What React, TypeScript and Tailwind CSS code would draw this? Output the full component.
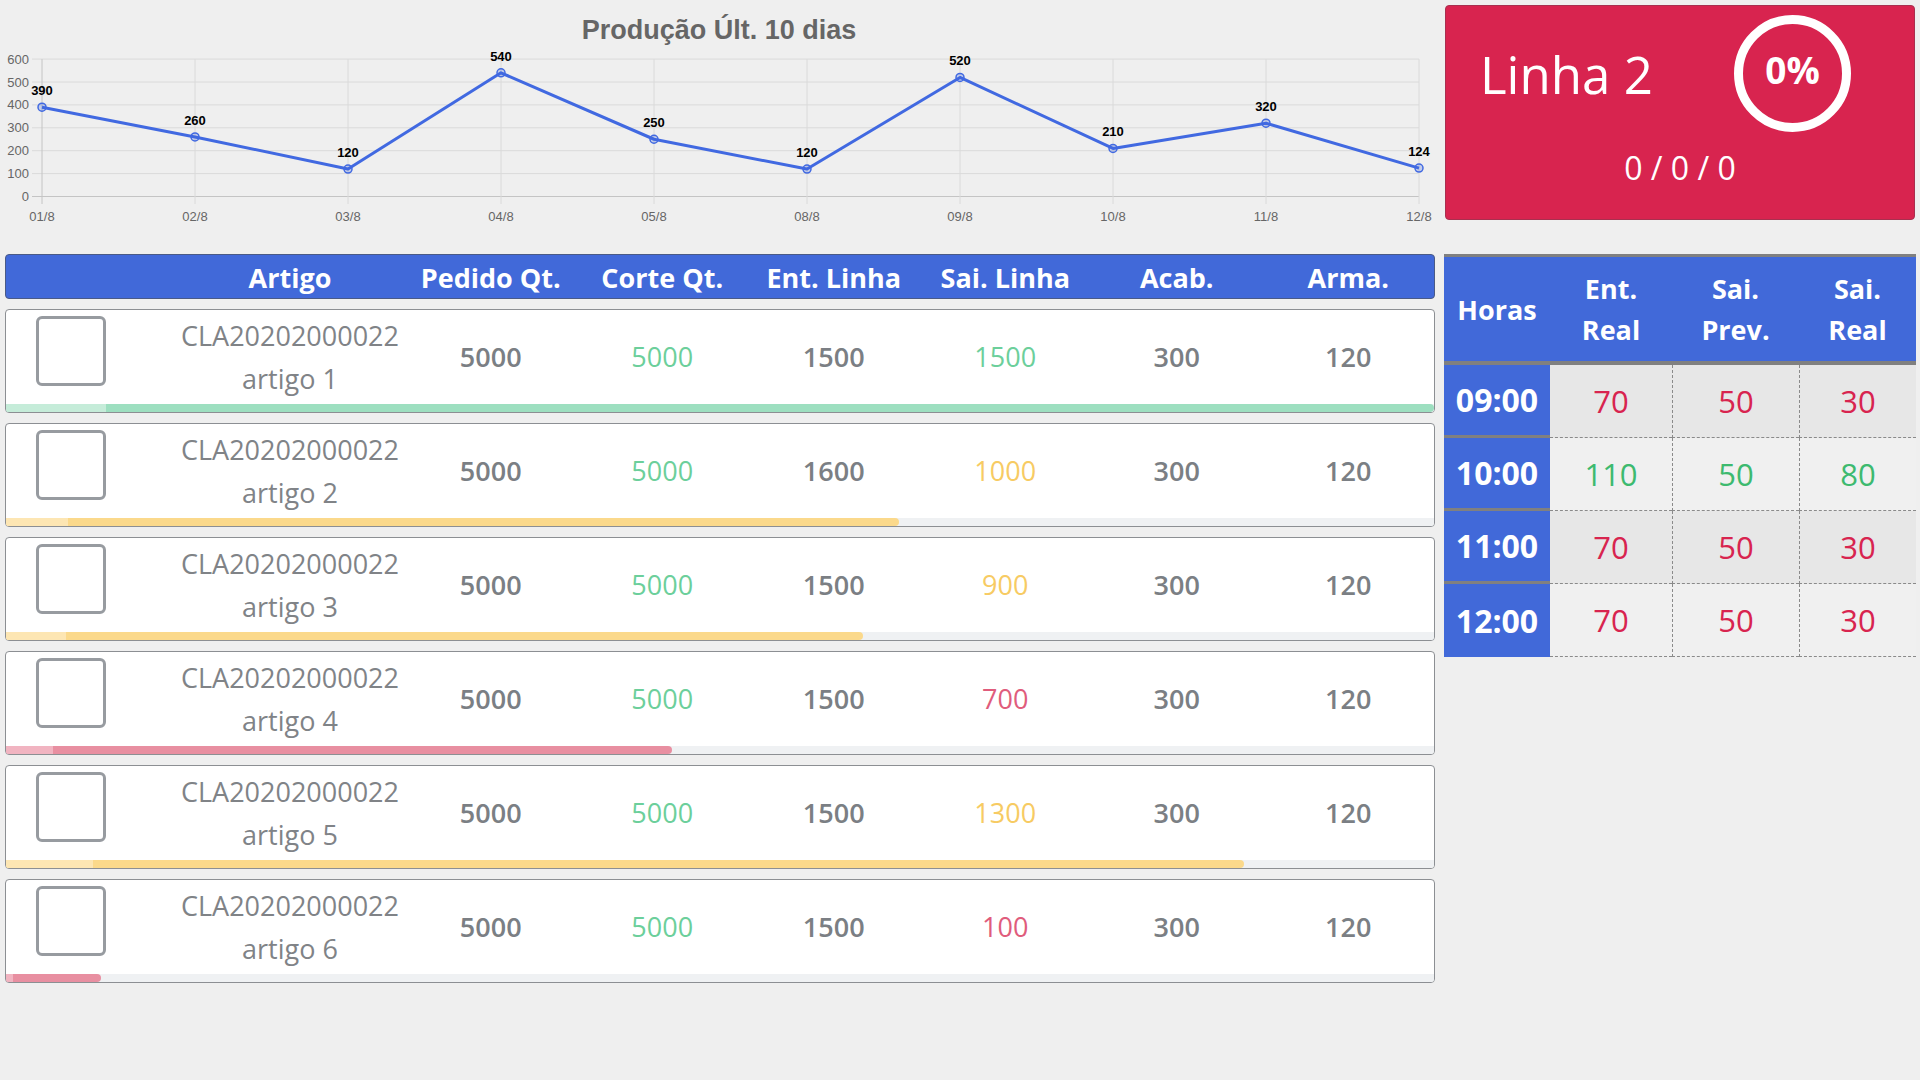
import React from 'react';

const chartData = [390, 260, 120, 540, 250, 120, 520, 210, 320, 124];
const chartLabels = ['01/8', '02/8', '03/8', '04/8', '05/8', '08/8', '09/8', '10/8', '11/8', '12/8'];
const X = (i: number) => 42 + i * 153;
const Y = (v: number) => 196.5 - v * 0.229;

type Tone = 'green' | 'yellow' | 'pink';

const tones: Record<Tone, { text: string; bar: string; light: string }> = {
  green: { text: 'text-[#6ccf9b]', bar: 'bg-[#9ddfc0]', light: 'bg-[#c5ecd9]' },
  yellow: { text: 'text-[#f7cb63]', bar: 'bg-[#fbd98b]', light: 'bg-[#fde6b3]' },
  pink: { text: 'text-[#e05c7c]', bar: 'bg-[#e88fa1]', light: 'bg-[#f1b4c1]' },
};

const items = [
  { nome: 'artigo 1', ent: 1500, sai: 1500, tone: 'green' as Tone },
  { nome: 'artigo 2', ent: 1600, sai: 1000, tone: 'yellow' as Tone },
  { nome: 'artigo 3', ent: 1500, sai: 900, tone: 'yellow' as Tone },
  { nome: 'artigo 4', ent: 1500, sai: 700, tone: 'pink' as Tone },
  { nome: 'artigo 5', ent: 1500, sai: 1300, tone: 'yellow' as Tone },
  { nome: 'artigo 6', ent: 1500, sai: 100, tone: 'pink' as Tone },
];

const horas = [
  { h: '09:00', vals: [70, 50, 30], ok: false },
  { h: '10:00', vals: [110, 50, 80], ok: true },
  { h: '11:00', vals: [70, 50, 30], ok: false },
  { h: '12:00', vals: [70, 50, 30], ok: false },
];

function Chart() {
  const pts = chartData.map((v, i) => `${X(i)},${Y(v)}`).join(' ');
  return (
    <div className="w-[1440px] h-[254px]">
      <div className="w-[1438px] h-[45px] pt-[15px] leading-[30px] text-center text-[27px] font-bold text-[#666] font-['Liberation_Sans',Arial,sans-serif]">
        Produção Últ. 10 dias
      </div>
      <svg width="1440" height="209" viewBox="0 45 1440 209" className="block" fontFamily="'Liberation Sans', Arial, sans-serif">
        {[0, 100, 200, 300, 400, 500, 600].map(v => (
          <g key={v}>
            <line x1={32} x2={1419} y1={Y(v)} y2={Y(v)} stroke={v === 0 ? '#c4c4c4' : '#dadada'} strokeWidth={1} />
            <text x={29} y={Y(v) + 4.5} textAnchor="end" fontSize={13} fill="#666">{v}</text>
          </g>
        ))}
        {chartLabels.map((l, i) => (
          <g key={l}>
            <line x1={X(i)} x2={X(i)} y1={Y(600)} y2={204} stroke={i === 0 ? '#c4c4c4' : '#dadada'} strokeWidth={1} />
            <text x={X(i)} y={221} textAnchor="middle" fontSize={13} fill="#666">{l}</text>
          </g>
        ))}
        <polyline points={pts} fill="none" stroke="#4169e1" strokeWidth={3} strokeLinejoin="round" />
        {chartData.map((v, i) => (
          <g key={i}>
            <circle cx={X(i)} cy={Y(v)} r={4} fill="rgba(65,105,225,0.25)" stroke="#4169e1" strokeWidth={1.5} />
            <text x={X(i)} y={Y(v) - 12} textAnchor="middle" fontSize={13} fontWeight="bold" fill="#000">{v}</text>
          </g>
        ))}
      </svg>
    </div>
  );
}

function LineCard() {
  return (
    <div className="ml-[5px] mt-[5px] w-[470px] h-[215px] rounded-[4px] border border-[#a8304f] bg-[#d8244f] text-white flex flex-col">
      <div className="flex items-center pt-[9px] pl-[34px] pr-[63px]">
        <span className="text-[51px] leading-[52px]">Linha 2</span>
        <div className="ml-auto w-[117px] h-[117px] rounded-full border-[9px] border-white flex items-center justify-center">
          <span className="text-[37px] leading-[37px] font-bold mb-[9px]">0%</span>
        </div>
      </div>
      <div className="mt-[16px] text-center text-[32px] leading-[40px]">0 / 0 / 0</div>
    </div>
  );
}

function MainTable() {
  const numCol = 'w-[171.5px] shrink-0 text-center';
  return (
    <div className="ml-[5px] w-[1430px]">
      <div className="h-[45px] pt-[3px] rounded-[4px] border border-[#4a5a86] bg-[#4169d9] flex items-center text-white font-bold text-[27px]">
        <div className="w-[169px] shrink-0" />
        <div className="w-[230px] shrink-0 text-center">Artigo</div>
        <div className={numCol}>Pedido Qt.</div>
        <div className={numCol}>Corte Qt.</div>
        <div className={numCol}>Ent. Linha</div>
        <div className={numCol}>Sai. Linha</div>
        <div className={numCol}>Acab.</div>
        <div className={numCol}>Arma.</div>
      </div>
      <div className="mt-[10px] flex flex-col gap-[10px]">
        {items.map(it => {
          const t = tones[it.tone];
          const pct = (it.sai / it.ent) * 100;
          return (
            <div key={it.nome} className="h-[104px] rounded-[4px] border border-[#8c8f93] bg-white overflow-hidden flex flex-col">
              <div className="flex-1 flex items-center text-[27px] text-[#7b7f84]">
                <div className="w-[169px] shrink-0 self-start pt-[6px] pl-[30px]">
                  <div className="w-[70px] h-[70px] rounded-[6px] border-[3px] border-[#979ba0] bg-white" />
                </div>
                <div className="w-[230px] shrink-0 text-center leading-[43px] text-[#808387]">
                  <div>CLA20202000022</div>
                  <div>{it.nome}</div>
                </div>
                <div className={`${numCol} font-semibold`}>5000</div>
                <div className={`${numCol} text-[#6ccf9b]`}>5000</div>
                <div className={`${numCol} font-semibold`}>{it.ent}</div>
                <div className={`${numCol} ${t.text}`}>{it.sai}</div>
                <div className={`${numCol} font-semibold`}>300</div>
                <div className={`${numCol} font-semibold`}>120</div>
              </div>
              <div className="h-[8px] bg-[#eff1f3] shrink-0">
                <div className={`h-full rounded-r-full ${t.bar} flex`} style={{ width: `${pct}%` }}>
                  <div className={`h-full w-[7%] ${t.light}`} />
                </div>
              </div>
            </div>
          );
        })}
      </div>
    </div>
  );
}

function HoursTable() {
  const widths = ['w-[122px]', 'w-[127px]', 'w-[117px]'];
  return (
    <div className="ml-[9px] w-[472px] border-t-[3px] border-[#808080]">
      <div className="h-[104px] bg-[#4169d9] flex items-center text-white font-bold text-[27px] leading-[41px] text-center">
        <div className="w-[106px]">Horas</div>
        <div className="w-[122px]">Ent.<br />Real</div>
        <div className="w-[127px]">Sai.<br />Prev.</div>
        <div className="w-[117px]">Sai.<br />Real</div>
      </div>
      <div className="h-[4px] bg-[#808080]" />
      {horas.map((r, ri) => (
        <div key={r.h} className={`flex h-[73px] ${ri % 2 === 0 ? 'bg-[#e7e7e7]' : 'bg-[#f0f0f0]'}`}>
          <div className={`w-[106px] shrink-0 bg-[#4169d9] flex items-center justify-center text-white font-bold text-[32px] ${ri < horas.length - 1 ? 'border-b-[3px] border-[#808080]' : ''}`}>
            {r.h}
          </div>
          {r.vals.map((v, i) => (
            <div
              key={i}
              className={`${widths[i]} shrink-0 flex items-center justify-center text-[31px] border-b border-dashed border-[#8a8a8a] ${i > 0 ? 'border-l' : ''} ${r.ok ? 'text-[#3dba6f]' : 'text-[#d8244f]'}`}
            >
              {v}
            </div>
          ))}
        </div>
      ))}
    </div>
  );
}

export default function App() {
  return (
    <div className="min-h-screen w-[1920px] bg-[#efefef] font-['Open_Sans',sans-serif]">
      <div className="flex">
        <Chart />
        <LineCard />
      </div>
      <div className="flex">
        <MainTable />
        <HoursTable />
      </div>
    </div>
  );
}
